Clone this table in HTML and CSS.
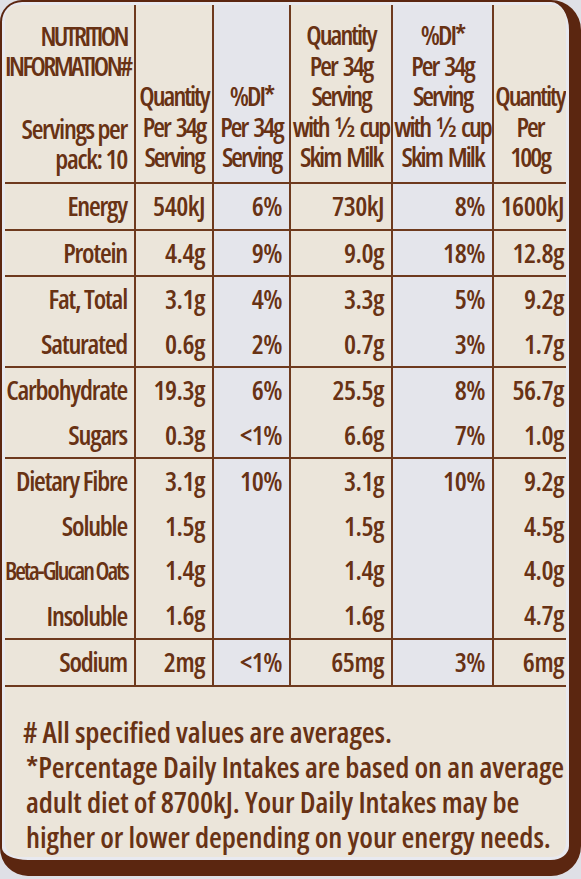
FILE: index.html
```html
<!DOCTYPE html>
<html lang="en">
<head>
    <meta charset="UTF-8">
    <meta name="viewport" content="width=device-width, initial-scale=1.0">
    <title>Nutrition Information</title>
    <link rel="stylesheet" href="styles.css">
</head>
<body>
    <div class="frame">
        <div class="panel">
            <div class="facts">
                <!-- header -->
                <div class="head lbl">
                    <div class="title">NUTRITION<br>INFORMATION#</div>
                    <div>Servings per<br>pack: 10</div>
                </div>
                <div class="head">Quantity<br>Per 34g<br>Serving</div>
                <div class="head di">%DI*<br>Per 34g<br>Serving</div>
                <div class="head">Quantity<br>Per 34g<br>Serving<br>with ½ cup<br>Skim Milk</div>
                <div class="head di">%DI*<br>Per 34g<br>Serving<br>with ½ cup<br>Skim Milk</div>
                <div class="head">Quantity<br>Per<br>100g</div>

                <div class="lbl">Energy</div>
                <div class="num">540kJ</div>
                <div class="num di">6%</div>
                <div class="num">730kJ</div>
                <div class="num di">8%</div>
                <div class="num last">1600kJ</div>

                <div class="lbl">Protein</div>
                <div class="num">4.4g</div>
                <div class="num di">9%</div>
                <div class="num">9.0g</div>
                <div class="num di">18%</div>
                <div class="num last">12.8g</div>

                <div class="lbl">Fat, Total<br>Saturated</div>
                <div class="num">3.1g<br>0.6g</div>
                <div class="num di">4%<br>2%</div>
                <div class="num">3.3g<br>0.7g</div>
                <div class="num di">5%<br>3%</div>
                <div class="num last">9.2g<br>1.7g</div>

                <div class="lbl">Carbohydrate<br>Sugars</div>
                <div class="num">19.3g<br>0.3g</div>
                <div class="num di">6%<br>&lt;1%</div>
                <div class="num">25.5g<br>6.6g</div>
                <div class="num di">8%<br>7%</div>
                <div class="num last">56.7g<br>1.0g</div>

                <div class="lbl">Dietary Fibre<br>Soluble<br><span class="tight">Beta-Glucan Oats</span><br>Insoluble</div>
                <div class="num">3.1g<br>1.5g<br>1.4g<br>1.6g</div>
                <div class="num di">10%</div>
                <div class="num">3.1g<br>1.5g<br>1.4g<br>1.6g</div>
                <div class="num di">10%</div>
                <div class="num last">9.2g<br>4.5g<br>4.0g<br>4.7g</div>

                <div class="lbl">Sodium</div>
                <div class="num">2mg</div>
                <div class="num di">&lt;1%</div>
                <div class="num">65mg</div>
                <div class="num di">3%</div>
                <div class="num last">6mg</div>
            </div>

            <p class="notes">
                <span class="hash"># All specified values are averages.</span><br>
                *Percentage Daily Intakes are based on an average<br>
                adult diet of 8700kJ. Your Daily Intakes may be<br>
                higher or lower depending on your energy needs.
            </p>
        </div>
    </div>
</body>
</html>
```
FILE: styles.css
```css
body {
    margin: 0;
    padding: 0;
    background-color: #dfe0e6;
    font-family: "Open Sans", "Roboto", sans-serif;
    font-stretch: 75%;
    color: #683214;
}

.frame {
    box-sizing: border-box;
    width: 581px;
    padding: 3px;
    background-color: #e8e9ef;
    border-style: solid;
    border-color: #5b2610;
    border-width: 2px 12px 16px 2px;
    border-radius: 22px 30px 30px 28px;
}

.panel {
    height: 852px;
    background-color: #ebe5da;
    border-radius: 14px;
    overflow: hidden;
}

.facts {
    display: grid;
    grid-template-columns: 129px 78px 77px 102px 101px 74px;
    border-bottom: 2px solid #6e3a1e;
    font-size: 27px;
    font-weight: 600;
    letter-spacing: -0.5px;
}

.facts > div {
    box-sizing: border-box;
    padding-right: 7px;
    line-height: 44.5px;
    text-align: right;
    white-space: nowrap;
    border-top: 2px solid #6e3a1e;
}

.facts > div:not(.lbl) {
    border-left: 2px solid #6e3a1e;
}

.facts > .lbl {
    letter-spacing: -1.2px;
}

.facts > .head {
    height: 177px;
    padding: 0 0 9.5px;
    border-top: none;
    line-height: 30.5px;
    letter-spacing: -2px;
    word-spacing: 3px;
    text-align: center;
    display: flex;
    flex-direction: column;
    justify-content: flex-end;
}

.facts > .head.lbl {
    padding: 16px 7px 8px 0;
    text-align: right;
    justify-content: space-between;
    line-height: 30px;
    letter-spacing: -1.3px;
    word-spacing: 0;
}

.title {
    letter-spacing: -2.6px;
}

.di {
    background-color: #e4e5eb;
}

.facts > .last {
    padding-right: 2px;
}

.tight {
    font-size: 24.5px;
    letter-spacing: -2px;
}

.notes {
    margin: 0;
    padding: 27px 0 0 21px;
    font-size: 29.5px;
    font-weight: 600;
    font-stretch: 83%;
    line-height: 35px;
    letter-spacing: -0.1px;
}

.hash {
    margin-left: -3px;
}
```
